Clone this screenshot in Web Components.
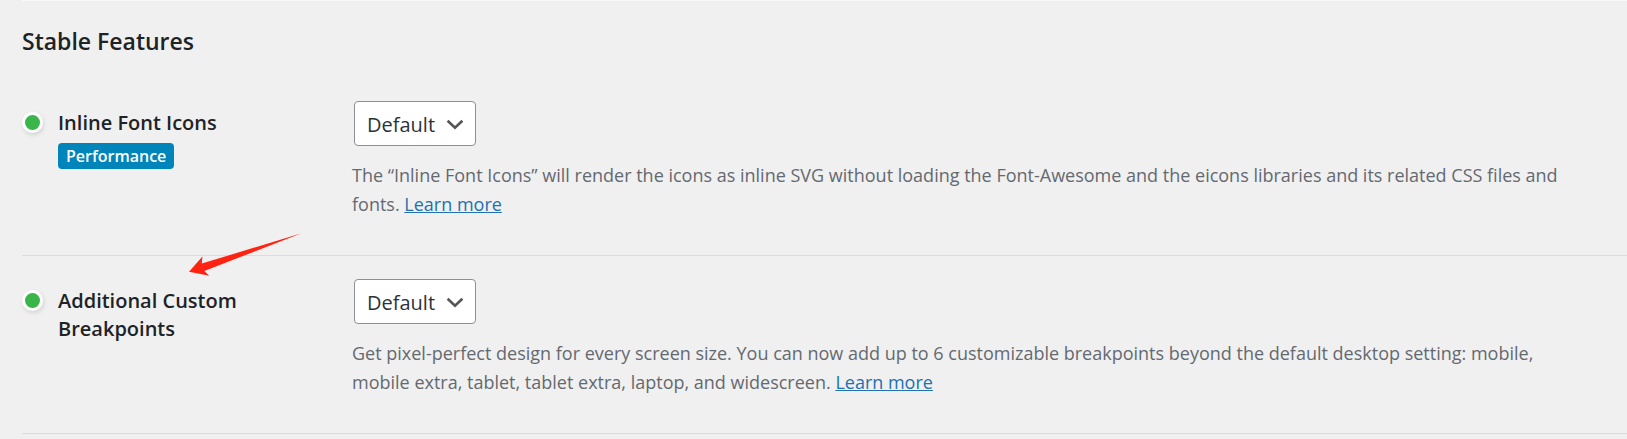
<!DOCTYPE html>
<html lang="en">
<head>
<meta charset="UTF-8">
<meta name="viewport" content="width=device-width, initial-scale=1">
<title>Stable Features</title>
<style>
  body {
    margin: 0;
    background: #f0f0f0;
    color: #1d2327;
    font-family: "Segoe UI", "Open Sans", "Noto Sans", sans-serif;
  }
</style>
</head>
<body>

<feature-list>
  <span slot="title">Stable Features</span>
  <feature-row name="Inline Font Icons" tag="Performance">
    The “Inline Font Icons” will render the icons as inline SVG without loading the Font-Awesome and the eicons libraries and its related CSS files and fonts.
    <a href="#">Learn more</a>
  </feature-row>
  <feature-row name="Additional Custom Breakpoints">
    <pointer-arrow slot="pointer"></pointer-arrow>
    Get pixel-perfect design for every screen size. You can now add up to 6 customizable breakpoints beyond the default desktop setting: mobile, mobile extra, tablet, tablet extra, laptop, and widescreen.
    <a href="#">Learn more</a>
  </feature-row>
</feature-list>

<script>
const listTemplate = document.createElement('template');
listTemplate.innerHTML = `
  <style>
    :host {
      display: block;
      margin-left: 22px;
      border-top: 1px solid #f8f8f8;
    }

    h2 {
      margin: 0;
      padding: 23px 0 20px;
      font-size: 23px;
      font-weight: 600;
      line-height: 34px;
    }
  </style>
  <h2><slot name="title"></slot></h2>
  <slot></slot>
`;

class FeatureList extends HTMLElement {
  constructor() {
    super();
    this.attachShadow({ mode: 'open' });
    this.shadowRoot.appendChild(listTemplate.content.cloneNode(true));
  }
}

const rowTemplate = document.createElement('template');
rowTemplate.innerHTML = `
  <style>
    :host {
      position: relative;
      display: grid;
      grid-template-columns: 294px 1fr;
      gap: 36px;
      padding: 23px 62px 36px 0;
      border-bottom: 1px solid #dcdcde;
    }

    .head {
      display: flex;
      align-items: flex-start;
      gap: 15px;
      padding-top: 8px;
    }

    .status {
      flex: none;
      box-sizing: border-box;
      width: 21px;
      height: 21px;
      margin-top: 3px;
      border: 3px solid #fff;
      border-radius: 50%;
      background: #39b54a;
      box-shadow: 1px 2px 4px rgba(0, 0, 0, 0.12);
    }

    .name {
      max-width: 220px;
    }

    label {
      display: block;
      font-size: 20px;
      font-weight: 600;
      line-height: 28px;
    }

    .tag {
      display: inline-block;
      margin-top: 6px;
      padding: 1px 8px 0;
      border-radius: 4px;
      background: #0085ba;
      color: #fff;
      font-size: 16px;
      font-weight: 600;
      line-height: 25px;
    }

    .tag[hidden] {
      display: none;
    }

    .control {
      position: relative;
      display: block;
      width: 122px;
      margin-left: 2px;
    }

    select {
      display: block;
      box-sizing: border-box;
      width: 100%;
      height: 45px;
      padding: 2px 36px 0 12px;
      border: 1px solid #8c8f94;
      border-radius: 4px;
      appearance: none;
      background: #fff;
      color: #2c3338;
      font-family: inherit;
      font-size: 20px;
    }

    .control svg {
      position: absolute;
      top: 18px;
      right: 12px;
      pointer-events: none;
    }

    p {
      margin: 15px 0 0;
      color: #646970;
      font-size: 18px;
      line-height: 29px;
    }

    ::slotted(a) {
      color: #2271b1;
    }
  </style>
  <div class="head">
    <span class="status"></span>
    <div class="name">
      <label for="state"></label>
      <span class="tag"></span>
    </div>
  </div>
  <div>
    <div class="control">
      <select id="state">
        <option>Default</option>
        <option>Active</option>
        <option>Inactive</option>
      </select>
      <svg width="18" height="11" viewBox="0 0 18 11" fill="none" stroke="#555" stroke-width="2.6">
        <path d="M1.6 1.8l7.4 7 7.4-7"/>
      </svg>
    </div>
    <p><slot></slot></p>
  </div>
  <slot name="pointer"></slot>
`;

class FeatureRow extends HTMLElement {
  constructor() {
    super();
    this.attachShadow({ mode: 'open' });
    this.shadowRoot.appendChild(rowTemplate.content.cloneNode(true));

    this.label = this.shadowRoot.querySelector('label');
    this.tagLabel = this.shadowRoot.querySelector('.tag');
  }

  connectedCallback() {
    this.label.textContent = this.getAttribute('name');
    this.tagLabel.textContent = this.getAttribute('tag');
    this.tagLabel.hidden = !this.hasAttribute('tag');
  }
}

const arrowTemplate = document.createElement('template');
arrowTemplate.innerHTML = `
  <style>
    /* lies over the divider above the row */
    :host {
      position: absolute;
      top: -23px;
      left: 167px;
      z-index: 1;
      pointer-events: none;
    }

    svg {
      display: block;
    }
  </style>
  <svg width="113" height="44" viewBox="0 0 113 44" fill="#ff2412">
    <path d="M0 38.7L13.4 23.5 12.8 30.6 112.5 0.2 15.3 38 20.3 42.8z"/>
  </svg>
`;

class PointerArrow extends HTMLElement {
  constructor() {
    super();
    this.attachShadow({ mode: 'open' });
    this.shadowRoot.appendChild(arrowTemplate.content.cloneNode(true));
  }
}

customElements.define('feature-list', FeatureList);
customElements.define('feature-row', FeatureRow);
customElements.define('pointer-arrow', PointerArrow);
</script>
</body>
</html>
